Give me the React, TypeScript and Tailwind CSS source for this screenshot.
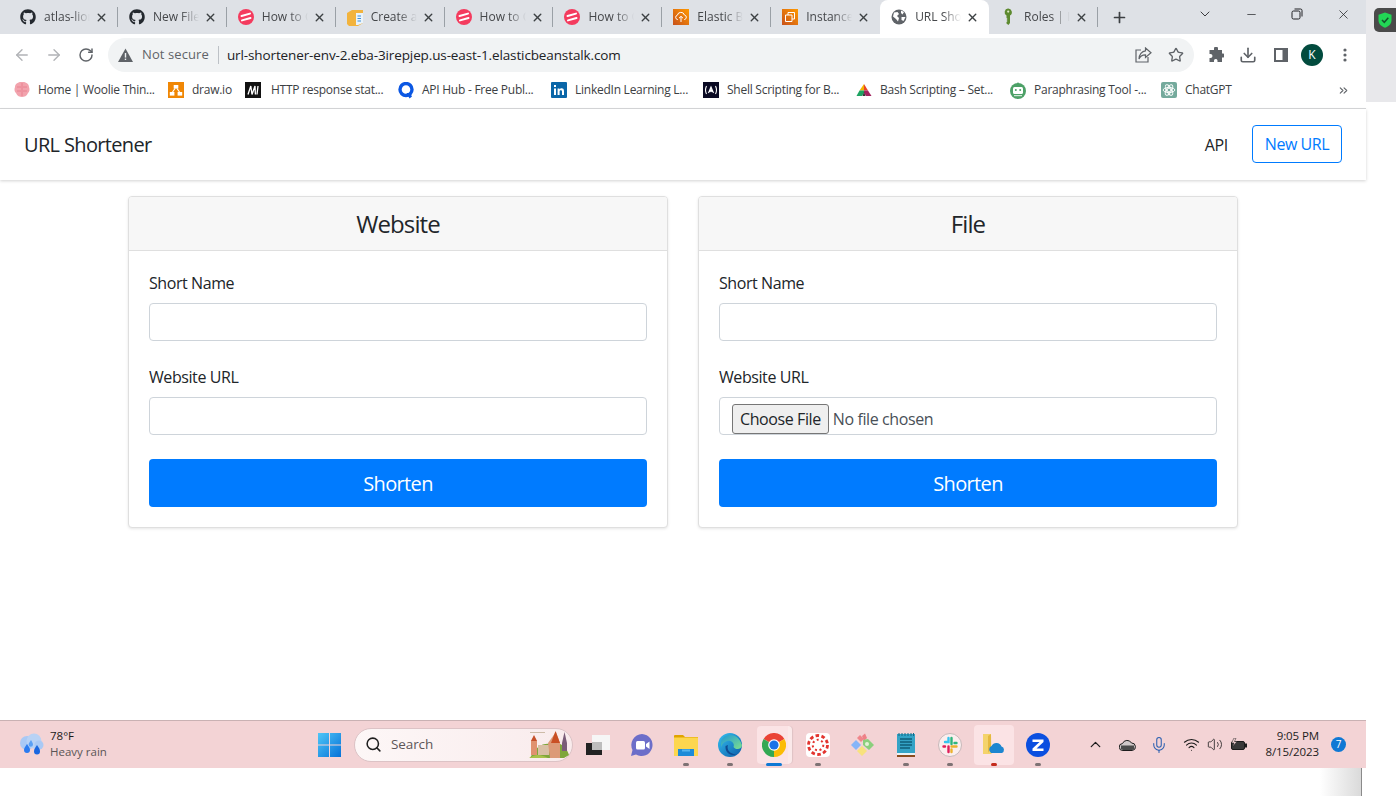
import React from "react";
import { FaGithub } from "react-icons/fa";
import { ArrowLeft, ArrowRight, RotateCw, X, Star, Download, Search, ChevronUp, ChevronDown, Minus, Plus, Mic, Wifi, Volume2, ChevronsRight } from "lucide-react";

const ui = { fontFamily: '"Open Sans", "Noto Sans", sans-serif' };

function HowTo() {
  return (
    <svg width="16" height="16" viewBox="0 0 16 16">
      <circle cx="8" cy="8" r="8" fill="#f43b5e" />
      <path d="M3.5 7 L12 4.6 M4 11.4 L12.5 9" stroke="#fff" strokeWidth="2" strokeLinecap="round" />
    </svg>
  );
}
function BoxIcon() {
  return (
    <svg width="16" height="17" viewBox="0 0 16 17">
      <path d="M0 4 L5 1 H16 V14 L11 17 H2 L0 15 Z" fill="#f2b33d" />
      <path d="M9 4 H16 V14 L11 16 H9 Z" fill="#e9f3fb" />
      <path d="M10.5 7 H14 M10.5 9.5 H14 M10.5 12 H14" stroke="#3d8fd8" strokeWidth="1.2" />
    </svg>
  );
}
function Elastic() {
  return (
    <svg width="16" height="16" viewBox="0 0 16 16">
      <defs>
        <linearGradient id="ao" x1="0" y1="1" x2="1" y2="0">
          <stop offset="0" stopColor="#c8511b" />
          <stop offset="1" stopColor="#f90" />
        </linearGradient>
      </defs>
      <rect width="16" height="16" fill="url(#ao)" />
      <path d="M5 10.5 H4.4 A2.2 2.2 0 0 1 4.4 6.2 A3.6 3.6 0 0 1 11.4 6 A2.3 2.3 0 0 1 11.6 10.5 H11 M8 13 V7.5 M6 9.2 L8 7.3 L10 9.2" fill="none" stroke="#fff" strokeWidth="1" />
    </svg>
  );
}
function Instances() {
  return (
    <svg width="16" height="16" viewBox="0 0 16 16">
      <defs>
        <linearGradient id="ap" x1="0" y1="1" x2="1" y2="0">
          <stop offset="0" stopColor="#c8511b" />
          <stop offset="1" stopColor="#f90" />
        </linearGradient>
      </defs>
      <rect width="16" height="16" fill="url(#ap)" />
      <path d="M6 6 V3.5 H12.5 V10 H10 M3.5 6 H10 V12.5 H3.5 Z" fill="none" stroke="#fff" strokeWidth="1" />
    </svg>
  );
}
function Globe() {
  return (
    <svg width="16" height="16" viewBox="0 0 16 16">
      <circle cx="8" cy="8" r="7.5" fill="#5f6368" />
      <path d="M3 3.5 L6.5 3 L8 5 L6 7 L8 9 L7 12.5 L5 10 L2 7.5 Z M10 1.5 L13 3 L11.5 5.5 L10 4 Z M10.5 8 H14.5 L12.5 12 L10.5 11 Z" fill="#fff" />
    </svg>
  );
}
function Key() {
  return (
    <svg width="16" height="18" viewBox="0 0 16 18">
      <path d="M8 0.5 A3.7 3.7 0 0 1 10 7.4 V15 L8.4 17 L6.5 15.5 V14 L7.6 13 L6.5 12 L7.6 11 L6.5 10 V7.4 A3.7 3.7 0 0 1 8 0.5 Z" fill="#5d8a2f" />
      <circle cx="8.2" cy="3.6" r="1.1" fill="#dfe8c8" />
    </svg>
  );
}
function Brain() {
  return (
    <svg width="16" height="18" viewBox="0 0 16 18">
      <path d="M8 1 C4 0.5 1 3 1 6 C0 8 0.5 11 2 12 C3 15 6 16 8 16 C10 16 13 15 14 12 C15.5 11 16 8 15 6 C15 3 12 0.5 8 1 Z" fill="#f2a3ad" />
      <path d="M8 2 V15 M3 6 H7 M9 6 H13 M3 10 H7 M9 10 H13" stroke="#e87f8e" strokeWidth="0.9" />
    </svg>
  );
}
function DrawIo() {
  return (
    <svg width="16" height="16" viewBox="0 0 16 16">
      <rect width="16" height="16" fill="#f08705" />
      <rect x="5.7" y="3" width="4.6" height="3.6" fill="#fff" />
      <rect x="1.8" y="10" width="4.6" height="3.6" fill="#fff" />
      <rect x="9.6" y="10" width="4.6" height="3.6" fill="#fff" />
      <path d="M7 6.5 L4.5 10 M9 6.5 L11.5 10" stroke="#fff" strokeWidth="1.2" />
    </svg>
  );
}
function MIcon() {
  return (
    <svg width="16" height="16" viewBox="0 0 16 16">
      <rect width="16" height="16" fill="#111" />
      <path d="M3 12.5 L5.8 4 L7 12.5 L10 4 L10.4 12.5 M13 4 L12 12.5" fill="none" stroke="#fff" strokeWidth="1.3" />
    </svg>
  );
}
function QIcon() {
  return (
    <svg width="16" height="17" viewBox="0 0 16 17">
      <path d="M8 1.5 A6 6 0 1 0 8 13.5 A6 6 0 1 0 8 1.5 Z" fill="none" stroke="#0b57e3" strokeWidth="3.4" />
      <path d="M8.5 11 L11.5 16.5 L14 14.5 L12 11 Z" fill="#0b57e3" />
    </svg>
  );
}
function LinkedIn() {
  return (
    <svg width="16" height="16" viewBox="0 0 16 16">
      <rect width="16" height="16" rx="1" fill="#0a66a8" />
      <path d="M3 6.4 H5 V13 H3 Z M3 3 H5 V5 H3 Z M6.6 6.4 H8.5 V7.5 C9.6 5.8 13 5.8 13 9 V13 H11 V9.6 C11 7.8 8.6 7.8 8.6 9.6 V13 H6.6 Z" fill="#fff" />
    </svg>
  );
}
function Shell() {
  return (
    <svg width="16" height="16" viewBox="0 0 16 16">
      <rect width="16" height="16" fill="#0a0a23" />
      <path d="M3.5 4 Q1.5 8 3.5 12 M12.5 4 Q14.5 8 12.5 12 M5.5 11 L8 5 L10.5 11 M7 10 L8 8 L9 10" fill="none" stroke="#fff" strokeWidth="1.1" />
    </svg>
  );
}
function BashIcon() {
  return (
    <svg width="16" height="14" viewBox="0 0 16 14">
      <path d="M8 1 L3.5 7.5 H8 Z" fill="#f4b400" />
      <path d="M8 1 L12 7.5 H8 Z" fill="#e8452c" />
      <path d="M3.5 7.5 L0.5 13 H6 L8 10 L8 7.5 Z" fill="#1ea362" />
      <path d="M8 7.5 L8 10 L10 13 H15.5 L12 7.5 Z" fill="#a2235f" />
      <path d="M8 9 L6.5 13 H9.5 Z" fill="#333" />
    </svg>
  );
}
function Robot() {
  return (
    <svg width="16" height="17" viewBox="0 0 16 17">
      <circle cx="8" cy="9" r="8" fill="#4da167" />
      <rect x="7.4" y="0.5" width="1.2" height="3" fill="#4da167" />
      <rect x="3" y="5" width="10" height="7" rx="1.5" fill="#fff" />
      <circle cx="5.8" cy="8" r="1" fill="#4da167" />
      <circle cx="10.2" cy="8" r="1" fill="#4da167" />
      <rect x="4" y="13" width="8" height="1.2" fill="#cfe6d6" />
    </svg>
  );
}
function Gpt() {
  return (
    <svg width="16" height="16" viewBox="0 0 16 16">
      <rect width="16" height="16" rx="2" fill="#74aa9c" />
      <g fill="none" stroke="#fff" strokeWidth="0.9">
        <circle cx="8" cy="8" r="1.8" />
        <ellipse cx="8" cy="8" rx="5.8" ry="2.6" />
        <ellipse cx="8" cy="8" rx="5.8" ry="2.6" transform="rotate(60 8 8)" />
        <ellipse cx="8" cy="8" rx="5.8" ry="2.6" transform="rotate(120 8 8)" />
      </g>
    </svg>
  );
}

const tabs: { t: string; i: React.ReactNode; active?: boolean }[] = [
  { t: "atlas-lion", i: <FaGithub size={16} color="#24292f" /> },
  { t: "New File", i: <FaGithub size={16} color="#24292f" /> },
  { t: "How to C", i: <HowTo /> },
  { t: "Create a", i: <BoxIcon /> },
  { t: "How to C", i: <HowTo /> },
  { t: "How to C", i: <HowTo /> },
  { t: "Elastic Be", i: <Elastic /> },
  { t: "Instances", i: <Instances /> },
  { t: "URL Sho", i: <Globe />, active: true },
  { t: "Roles | IA", i: <Key /> },
];

const bookmarks: { t: string; i: React.ReactNode; c: string; g?: string }[] = [
  { t: "Home | Woolie Thin...", i: <Brain />, c: "w-[154px]" },
  { t: "draw.io", i: <DrawIo />, c: "w-[77px]" },
  { t: "HTTP response stat...", i: <MIcon />, c: "w-[153px]", g: "w-[26px]" },
  { t: "API Hub - Free Publ...", i: <QIcon />, c: "w-[153px]" },
  { t: "LinkedIn Learning L...", i: <LinkedIn />, c: "w-[152px]" },
  { t: "Shell Scripting for B...", i: <Shell />, c: "w-[153px]" },
  { t: "Bash Scripting – Set...", i: <BashIcon />, c: "w-[154px]" },
  { t: "Paraphrasing Tool -...", i: <Robot />, c: "w-[151px]" },
  { t: "ChatGPT", i: <Gpt />, c: "w-[100px]" },
];

function TabStrip() {
  return (
    <div className="flex h-[34px] items-center bg-[#dee1e6] pl-[9px]">
      {tabs.map((tab, n) => {
        const hideSep = tab.active || (tabs[n + 1] && tabs[n + 1].active);
        return (
          <div
            key={n}
            className={
              tab.active
                ? "relative flex h-[34px] w-[108.9px] items-center rounded-t-lg bg-white pl-[11px]"
                : "relative flex h-[34px] w-[108.9px] items-center pl-[11px]"
            }
          >
            <div className="flex w-4 shrink-0 items-center justify-center">{tab.i}</div>
            <div className="ml-2 w-[46px] shrink-0 overflow-hidden whitespace-nowrap text-[12px] text-[#45474a] [mask-image:linear-gradient(to_right,black_60%,transparent)]">
              {tab.t}
            </div>
            <X size={13} strokeWidth={2.6} color="#3c4043" className="ml-[5px] shrink-0" />
            {!hideSep && <div className="ml-auto h-[20px] w-px shrink-0 bg-[#9aa0a6]" />}
          </div>
        );
      })}
      <Plus size={17} strokeWidth={2.4} color="#3c4043" className="ml-[13px]" />
      <div className="ml-auto flex items-center pb-[6px]">
        <div className="flex w-[46px] justify-center"><ChevronDown size={16} strokeWidth={1.3} color="#202124" /></div>
        <div className="flex w-[46px] justify-center"><Minus size={13} strokeWidth={1.3} color="#202124" /></div>
        <div className="flex w-[46px] justify-center">
          <svg width="12" height="12" viewBox="0 0 12 12" fill="none" stroke="#202124">
            <rect x="1" y="3" width="8" height="8" rx="1.5" />
            <path d="M3.5 1 H9.5 A1.5 1.5 0 0 1 11 2.5 V8.5" />
          </svg>
        </div>
        <div className="flex w-[46px] justify-center"><X size={15} strokeWidth={1.2} color="#202124" /></div>
      </div>
    </div>
  );
}

function Toolbar() {
  return (
    <div className="flex h-[38px] items-center bg-white pl-[13px] pt-[4px]">
      <ArrowLeft size={18} strokeWidth={1.8} color="#b1b3b6" />
      <ArrowRight size={18} strokeWidth={1.8} color="#b1b3b6" className="ml-[14px]" />
      <RotateCw size={16} strokeWidth={2.2} color="#5f6368" className="ml-[15px]" />
      <div className="ml-[14px] flex h-[34px] w-[1086px] items-center rounded-full bg-[#f1f3f4] pl-[10px]">
        <svg width="15" height="14" viewBox="0 0 15 14">
          <path d="M7.5 0.5 L15 14 H0 Z" fill="#5f6368" />
          <rect x="6.8" y="5" width="1.4" height="4.6" fill="#f1f3f4" />
          <rect x="6.8" y="10.6" width="1.4" height="1.4" fill="#f1f3f4" />
        </svg>
        <span className="ml-[9px] text-[13px] tracking-[0.1px] text-[#5f6368]">Not secure</span>
        <div className="ml-[9px] h-[18px] w-px bg-[#bdc1c6]" />
        <span className="ml-[8px] text-[13.5px] tracking-[-0.12px] text-[#202124]">url-shortener-env-2.eba-3irepjep.us-east-1.elasticbeanstalk.com</span>
        <div className="ml-auto flex items-center pr-[10px]">
          <svg width="17" height="16" viewBox="0 0 17 16" fill="none" stroke="#5f6368" strokeWidth="1.2">
            <path d="M6 3 H1 V15 H13 V10" />
            <path d="M10.5 1 L16 5.8 L10.5 10.5 V7.8 C7.5 7.8 5 9 4 12 C4 7.5 7 4.2 10.5 3.8 Z" />
          </svg>
          <Star size={16} strokeWidth={2} color="#5f6368" className="ml-[16px]" />
        </div>
      </div>
      <svg width="16" height="16" viewBox="0 0 16 16" className="ml-[14px]" fill="#5f6368">
        <path d="M6 1.5 A2 2 0 0 1 10 1.5 V3 H14 V6.5 H15 A2 2 0 0 1 15 10.5 H14 V15 H9.5 V13.5 A1.8 1.8 0 0 0 6 13.5 V15 H1.5 V11 H2.5 A2 2 0 0 0 2.5 7 H1.5 V3 H6 Z" />
      </svg>
      <Download size={18} strokeWidth={2.2} color="#5f6368" className="ml-[15px]" />
      <svg width="14" height="14" viewBox="0 0 14 14" className="ml-[17px]">
        <rect width="14" height="14" fill="#5f6368" />
        <rect x="2" y="2" width="6.5" height="10" fill="#fff" />
      </svg>
      <div className="ml-[13px] flex h-[22px] w-[22px] items-center justify-center rounded-full bg-[#024b3e] text-[12px] text-white">K</div>
      <svg width="4" height="14" viewBox="0 0 4 14" className="ml-[20px]" fill="#5f6368">
        <circle cx="2" cy="2" r="1.6" />
        <circle cx="2" cy="7" r="1.6" />
        <circle cx="2" cy="12" r="1.6" />
      </svg>
    </div>
  );
}

function Bookmarks() {
  return (
    <div className="flex h-[37px] items-center border-b border-[#d8d9db] bg-white pl-[14px]">
      {bookmarks.map((b, n) => (
        <div key={n} className={"flex items-center " + b.c}>
          <div className={"flex shrink-0 items-center " + (b.g ? b.g : "w-[24px]")}>{b.i}</div>
          <span className="whitespace-nowrap text-[12px] tracking-[-0.25px] text-[#3c4043]">{b.t}</span>
        </div>
      ))}
      <ChevronsRight size={13} strokeWidth={2} color="#5f6368" className="ml-auto mr-[16px]" />
    </div>
  );
}

function Field({ label, file }: { label: string; file?: boolean }) {
  return (
    <div className="mb-6">
      <label className="mb-2 block h-6 text-[16px] leading-6 tracking-[-0.42px] text-[#212529]">{label}</label>
      {file ? (
        <input
          type="file"
          className="block h-[38px] w-full overflow-hidden rounded border border-[#ced4da] bg-white pl-3 pt-[6px] text-[16px] leading-6 tracking-[-0.4px] text-[#495057] file:mr-1 file:h-[30px] file:cursor-default file:rounded-[3px] file:border file:border-solid file:border-[#767676] file:bg-[#efefef] file:px-[7px] file:text-[#212529]"
        />
      ) : (
        <input type="text" className="block h-[38px] w-full rounded border border-[#ced4da] bg-white" />
      )}
    </div>
  );
}

function Card({ title, file }: { title: string; file?: boolean }) {
  return (
    <div className="flex-1 overflow-hidden rounded border border-[#dfdfdf] bg-white shadow-[0_1px_3px_rgba(0,0,0,0.1)]">
      <div className="flex h-[54px] items-center justify-center border-b border-[#dfdfdf] bg-[#f7f7f7] text-[24px] tracking-[-0.9px] text-[#212529]">
        {title}
      </div>
      <div className="px-5 pt-[20px] pb-5">
        <Field label="Short Name" />
        <Field label="Website URL" file={file} />
        <button className="flex h-12 w-full items-center justify-center rounded bg-[#007bff] pt-[1px] text-[20px] tracking-[-0.65px] text-white">
          Shorten
        </button>
      </div>
    </div>
  );
}

function Slot({ children, dot, active, tint }: { children: React.ReactNode; dot?: string; active?: boolean; tint?: boolean }) {
  return (
    <div className="relative flex h-[48px] w-[44px] shrink-0 items-center justify-center">
      {active && <div className="absolute left-[5px] top-[5px] h-[38px] w-[35px] rounded border-r-[4px] border-[#fbe9ea] bg-[#fbe3e5] shadow-[1px_0_1px_rgba(0,0,0,0.08)]" />}
      {tint && <div className="absolute left-[2px] top-[4px] h-[40px] w-[40px] rounded bg-[#fbe3e5]" />}
      <div className="relative flex items-center justify-center">{children}</div>
      {dot && <div className={"absolute bottom-[3px] left-1/2 h-[3px] -translate-x-1/2 rounded-full " + dot} />}
    </div>
  );
}

function Castle() {
  return (
    <svg width="42" height="28" viewBox="0 0 42 28">
      <path d="M2 27 C8 16 14 12 22 13 C30 10 38 14 41 24 L36 27 Z" fill="#7ea63b" />
      <path d="M3 10 L6 5 L9 10 V24 H3 Z" fill="#e0916f" />
      <path d="M3 10 L6 4 L9 10 Z" fill="#c5502b" />
      <rect x="10" y="14" width="11" height="10" fill="#d9bfa4" />
      <path d="M20 12 L28 1 L32 12 V27 H22 Z" fill="#dc9a78" />
      <path d="M23 12 L27.5 0 L32 12 Z" fill="#c94f24" />
      <path d="M34 12 L36.5 1 L39 12 V20 H34 Z" fill="#7a5d78" />
      <path d="M2 1.5 H17" stroke="#cdbba8" strokeWidth="1" />
      <path d="M1 27 C8 22 14 24 20 27 Z" fill="#a9c24a" />
    </svg>
  );
}

function Taskbar() {
  return (
    <div className="flex h-[48px] items-center border-t border-[#c9b1b3] bg-[#f3d3d5]">
      <svg width="26" height="26" viewBox="0 0 26 26" className="ml-[18px] shrink-0">
        <circle cx="9" cy="11" r="7" fill="#a9c9f5" />
        <circle cx="16" cy="9" r="7.5" fill="#b8d2f5" />
        <circle cx="21" cy="13" r="4.5" fill="#a9c9f5" />
        <path d="M9 12 C11 15 12 16 12 18 A3 3 0 0 1 6 18 C6 16 7 15 9 12 Z" fill="#2a7bf0" />
        <path d="M13 8 C14 10 15 11 15 12.5 A2.2 2.2 0 0 1 10.6 12.5 C10.6 11 12 10 13 8 Z" fill="#5aa0f5" />
        <path d="M19 13 C21 16 22 17 22 19.5 A3 3 0 0 1 16 19.5 C16 17 17 16 19 13 Z" fill="#1a67e0" />
      </svg>
      <div className="ml-[6px] w-[268px] shrink-0 pb-[2px] text-[11.5px] leading-[16px]">
        <div className="text-[#1a1a1a]">78°F</div>
        <div className="text-[#5a5556]">Heavy rain</div>
      </div>
      <svg width="23" height="26" viewBox="0 0 23 26" className="shrink-0">
        <defs>
          <linearGradient id="wn" x1="0" y1="0" x2="1" y2="1">
            <stop offset="0" stopColor="#4fc6f7" />
            <stop offset="1" stopColor="#0571d8" />
          </linearGradient>
        </defs>
        <path d="M0 1 H11 V12.500 H0 Z M12 1 H23 V12.500 H12 Z M0 13.500 H11 V25 H0 Z M12 13.500 H23 V25 H12 Z" fill="url(#wn)" />
      </svg>
      <div className="ml-[13px] flex h-[34px] w-[219px] shrink-0 items-center rounded-full border border-[#dcc3c6] bg-gradient-to-r from-[#fdf7f7] to-[#f9ebec] pl-[10px] pr-[2px]">
        <Search size={17} strokeWidth={2.2} color="#1f1f1f" />
        <span className="ml-[9px] text-[13.5px] tracking-[-0.1px] text-[#5c5658]">Search</span>
        <div className="ml-auto"><Castle /></div>
      </div>
      <div className="ml-[3px] flex shrink-0 items-center">
        <Slot>
          <svg width="24" height="20" viewBox="0 0 24 20">
            <rect x="0" y="8" width="16" height="12" fill="#222" />
            <rect x="6" y="0" width="18" height="15" fill="#f6f6f6" />
            <rect x="6" y="7" width="10" height="8" fill="#bdbdbd" />
          </svg>
        </Slot>
        <Slot>
          <svg width="24" height="24" viewBox="0 0 24 24">
            <path d="M12 1 A11 11 0 1 1 6 21.500 L1 23 L2.500 17 A11 11 0 0 1 12 1 Z" fill="#6c6ec9" />
            <rect x="6" y="8" width="9" height="8.500" rx="1.500" fill="#fff" />
            <path d="M16 11 L19.500 8.500 V16 L16 13.500 Z" fill="#fff" />
          </svg>
        </Slot>
        <Slot dot="w-[6px] bg-[#7d7274]">
          <svg width="24" height="22" viewBox="0 0 24 22">
            <path d="M0 2 A1 1 0 0 1 1 1 H9 L11 3 H24 V7 H0 Z" fill="#e0a400" />
            <rect x="0" y="3.500" width="24" height="18.500" fill="#fcd64f" />
            <path d="M4 15 H20 V22 H4 Z" fill="#1c8bd8" />
            <rect x="8" y="15.500" width="8" height="2" fill="#55b5ee" />
          </svg>
        </Slot>
        <Slot dot="w-[6px] bg-[#7d7274]">
          <svg width="24" height="24" viewBox="0 0 24 24">
            <defs>
              <linearGradient id="eg" x1="0" y1="0" x2="1" y2="1">
                <stop offset="0" stopColor="#35c1f1" />
                <stop offset="1" stopColor="#0a5ba8" />
              </linearGradient>
              <linearGradient id="eh" x1="0" y1="0" x2="1" y2="1">
                <stop offset="0" stopColor="#1e98d8" />
                <stop offset="1" stopColor="#7fe08a" />
              </linearGradient>
            </defs>
            <circle cx="12" cy="12" r="12" fill="url(#eg)" />
            <path d="M3 8 C6 0 20 -1 24 12 C24 17 17 17 15.500 14 C17 10 13 7 9 8 C6 9 4 11 3 14 Z" fill="url(#eh)" />
            <path d="M10 12 C8 17 13 22 19 21 C13 24 7 20 7.500 13 Z" fill="#0f4c92" />
          </svg>
        </Slot>
        <Slot active dot="w-[16px] bg-[#0f78d4]">
          <svg width="24" height="24" viewBox="0 0 24 24">
            <path d="M12 12 L1.600 6 A12 12 0 0 1 22.400 6 Z" fill="#ea4335" />
            <path d="M12 12 L22.400 6 A12 12 0 0 1 12 24 Z" fill="#fbbc05" />
            <path d="M12 12 L12 24 A12 12 0 0 1 1.600 6 Z" fill="#34a853" />
            <circle cx="12" cy="12" r="5.800" fill="#fff" />
            <circle cx="12" cy="12" r="4.600" fill="#1a73e8" />
          </svg>
        </Slot>
        <Slot dot="w-[6px] bg-[#7d7274]">
          <svg width="24" height="24" viewBox="0 0 24 24">
            <rect width="24" height="24" rx="4" fill="#fff" />
            <g fill="none" stroke="#e3342f" strokeWidth="2.800" strokeDasharray="3.600 2.400">
              <circle cx="12" cy="12" r="9.500" />
            </g>
            <g fill="none" stroke="#e3342f" strokeWidth="2" strokeDasharray="2 2.600">
              <circle cx="12" cy="12" r="5.300" />
            </g>
          </svg>
        </Slot>
        <Slot>
          <svg width="24" height="24" viewBox="0 0 24 24">
            <path d="M7 5 L10 2 L14 6 L11 9 Z" fill="#f0868b" />
            <path d="M1 12 L6 7 L11 12 L6 17 Z" fill="#86b5f8" />
            <path d="M12 3 L15 0.500 L17 5 L14 8 Z" fill="#ee8087" />
            <path d="M13 7 L18 6 L24 12 L19 17 L13 12 Z" fill="#8bcf7d" />
            <circle cx="17" cy="11" r="2" fill="#e3f2d6" />
            <path d="M7 18 L12 13 L17 18 L12 23 Z" fill="#f8e27d" />
          </svg>
        </Slot>
        <Slot dot="w-[6px] bg-[#7d7274]">
          <svg width="18" height="24" viewBox="0 0 18 24">
            <rect y="1" width="18" height="21" fill="#34a3c6" />
            <path d="M2 0 V3 M5 0 V3 M8 0 V3 M11 0 V3 M14 0 V3 M16.500 0 V3" stroke="#156a86" strokeWidth="1" />
            <path d="M3 6 H15 M3 9 H15 M3 12 H15 M3 15 H13" stroke="#0f5f7a" strokeWidth="1.400" />
            <rect y="20" width="18" height="2" fill="#e9f3f6" />
            <rect y="22" width="18" height="2" fill="#8a4b1d" />
          </svg>
        </Slot>
        <Slot dot="w-[6px] bg-[#7d7274]">
          <svg width="24" height="24" viewBox="0 0 24 24">
            <circle cx="12" cy="12" r="11.500" fill="#fbeeee" stroke="#b9adae" strokeWidth="0.800" />
            <path d="M10.500 5 V9 H7" stroke="#36c5f0" strokeWidth="2.400" strokeLinecap="round" fill="none" />
            <path d="M13.500 5 V11 M16.500 10 H18.500" stroke="#2eb67d" strokeWidth="2.400" strokeLinecap="round" fill="none" />
            <path d="M13.500 13.500 H18.500 M13.500 19 V16.500" stroke="#ecb22e" strokeWidth="2.400" strokeLinecap="round" fill="none" />
            <path d="M5.500 13.500 H7 M10.500 13.500 V19" stroke="#e01e5a" strokeWidth="2.400" strokeLinecap="round" fill="none" />
          </svg>
        </Slot>
        <Slot tint dot="w-[6px] bg-[#c42b1c]">
          <svg width="24" height="24" viewBox="0 0 24 24">
            <path d="M1 1 H9 L9.500 21 H1 Z" fill="#f4d36b" />
            <path d="M6 3 L9 1 V14 L6 20 Z" fill="#e5b93f" />
            <path d="M9 20 A4 4 0 0 1 9.500 13 A5.500 5.500 0 0 1 19.500 13.500 A3.500 3.500 0 0 1 20 20 Z" fill="#1d86d0" />
          </svg>
        </Slot>
        <Slot dot="w-[6px] bg-[#7d7274]">
          <svg width="24" height="24" viewBox="0 0 24 24">
            <circle cx="12" cy="12" r="12" fill="#0b4fe0" />
            <path d="M6.500 6.500 H17.500 V9 L10.500 15.500 H17.500 V18 H6.500 V15.500 L13.500 9 H6.500 Z" fill="#fff" />
          </svg>
        </Slot>
      </div>
      <div className="ml-[19px] flex flex-1 items-center">
        <div className="flex w-[32px] justify-center"><ChevronUp size={17} strokeWidth={1.8} color="#1c1c1c" /></div>
        <div className="flex w-[32px] justify-center">
          <svg width="17" height="12" viewBox="0 0 17 12">
            <path d="M4 11.500 A3.500 3.500 0 0 1 3.500 4.500 A5 5 0 0 1 12.500 4 A3.800 3.800 0 0 1 13.500 11.500 Z" fill="#d0c8c9" stroke="#1c1c1c" strokeWidth="1" />
            <path d="M2 6.500 H15 V10 L13.500 11 H4 L2 10 Z" fill="#4b4b4b" />
          </svg>
        </div>
        <div className="flex w-[32px] justify-center"><Mic size={18} strokeWidth={1.4} color="#2b5fb0" /></div>
        <div className="flex w-[32px] justify-center"><Wifi size={17} strokeWidth={1.5} color="#1c1c1c" /></div>
        <div className="flex w-[16px] justify-center"><Volume2 size={17} strokeWidth={1.2} color="#1c1c1c" /></div>
        <div className="ml-[3px] flex w-[24px] justify-center">
          <svg width="17" height="13" viewBox="0 0 17 13">
            <rect x="1.500" y="3.500" width="13" height="8" rx="1.500" fill="#3a3a3a" stroke="#1c1c1c" />
            <rect x="15" y="5.500" width="2" height="4" fill="#1c1c1c" />
            <path d="M4 0 L1.500 5 H4 L2.500 9 L7 3.500 H4.500 L6 0 Z" fill="#f3d3d5" stroke="#1c1c1c" strokeWidth="0.500" />
          </svg>
        </div>
        <div className="w-[69px] pb-[2px] text-right text-[11.5px] leading-[16px] tracking-[-0.1px] text-[#1c1c1c]">
          <div>9:05 PM</div>
          <div>8/15/2023</div>
        </div>
        <div className="ml-[12px] flex h-[15px] w-[15px] items-center justify-center rounded-full bg-[#0f78d4] text-[10px] text-white">7</div>
      </div>
    </div>
  );
}

export default function App() {
  return (
    <div className="flex h-[796px] w-[1396px] overflow-hidden bg-white" style={ui}>
      <div className="flex w-[1366px] shrink-0 flex-col">
        <TabStrip />
        <Toolbar />
        <Bookmarks />
        <div className="flex h-[71px] shrink-0 items-center bg-white pl-6 pr-6 shadow-[0_1px_3px_rgba(0,0,0,0.18)]">
          <span className="text-[20px] tracking-[-0.65px] text-[#212529]">URL Shortener</span>
          <span className="ml-auto text-[16px] tracking-[-0.3px] text-[#212529]">API</span>
          <div className="ml-6 mb-[1px] flex h-[38px] w-[90px] items-center justify-center rounded border border-[#007bff] text-[16px] tracking-[-0.45px] text-[#007bff]">
            New URL
          </div>
        </div>
        <div className="flex h-[540px] shrink-0 items-start gap-[30px] px-[128px] pt-[16px]">
          <Card title="Website" />
          <Card title="File" file />
        </div>
        <Taskbar />
        <div className="flex flex-1 justify-end pr-[4px]">
          <div className="h-full w-[42px] border-r border-[#8a8a8a] bg-gradient-to-r from-white to-[#dadada]" />
        </div>
      </div>
      <div className="flex-1">
        <div className="h-[102px] bg-[#e8e8eb] pl-[8px] pt-[8px]">
          <div className="flex h-[24px] w-[22px] items-center justify-center rounded-l-[5px] bg-[#4a4a4a]">
            <svg width="14" height="16" viewBox="0 0 14 16">
              <path d="M7 0.500 L13.500 2.800 V8 C13.500 12 10.500 14.500 7 15.800 C3.500 14.500 0.500 12 0.500 8 V2.800 Z" fill="#22d655" />
              <path d="M4 8 L6.300 10.300 L10.300 5.800" fill="none" stroke="#14532d" strokeWidth="1.500" />
            </svg>
          </div>
        </div>
      </div>
    </div>
  );
}
